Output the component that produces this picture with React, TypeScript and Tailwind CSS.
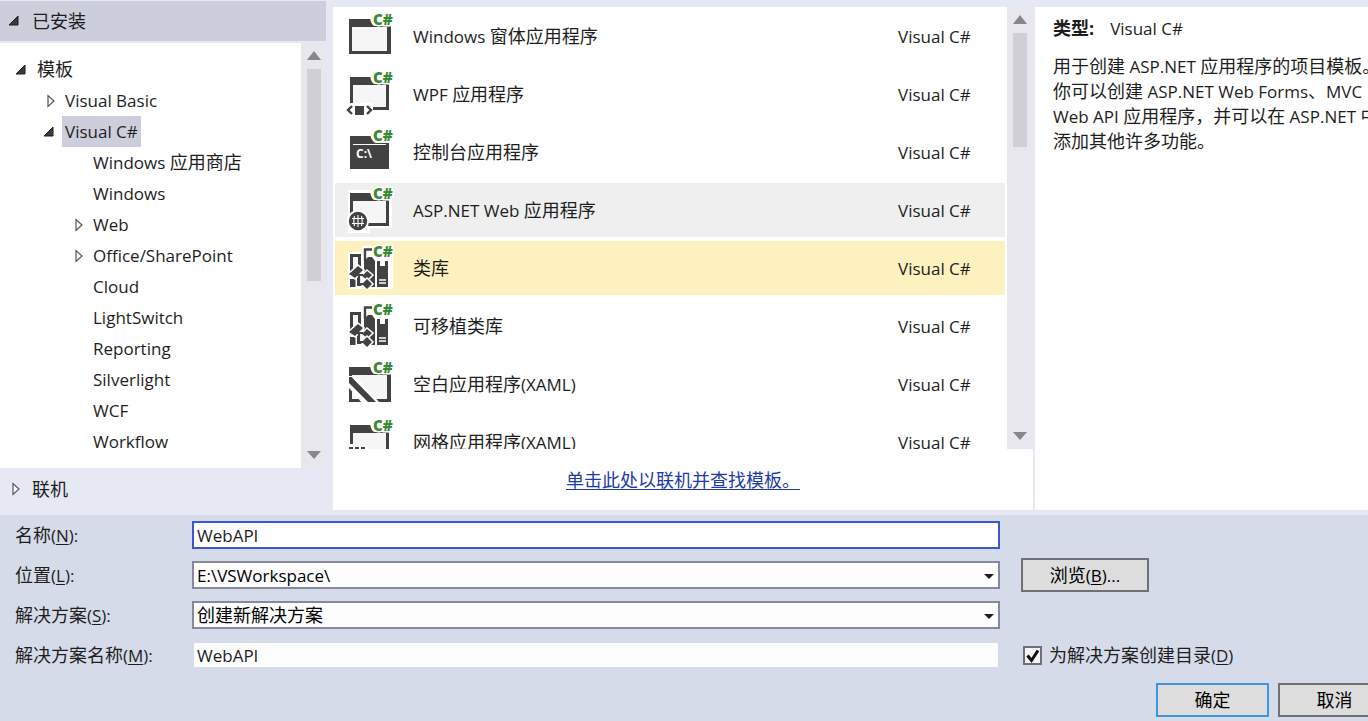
import React, { ReactNode, useState } from "react";

type TreeItem = {
  label: string;
  level: number;
  arrow?: "open" | "closed";
};

type Template = {
  name: string;
  icon: ReactNode;
};

const DARK = "#424242";
const PAPER = "#f6f6f6";

// Latin runs are set one pixel smaller than the Chinese around them
const Text = ({ children }: { children: string }) => (
  <>
    {children.split(/([\x20-\x7e]+)/).map((part, index) =>
      index % 2 ? (
        <span key={index} className="text-[17px] whitespace-pre">
          {part}
        </span>
      ) : (
        part
      )
    )}
  </>
);

// Label with its access key underlined, e.g. 名称(N):
const KeyLabel = ({ text, hotkey, end = "" }: { text: string; hotkey: string; end?: string }) => (
  <>
    {text}
    <span className="text-[17px]">
      (<u className="underline-offset-2">{hotkey}</u>){end}
    </span>
  </>
);

const Arrow = ({ type }: { type?: "open" | "closed" }) => (
  <svg width="12" height="16" viewBox="0 0 12 16" className="shrink-0" aria-hidden="true">
    {type === "open" && <path d="M10 3v9H1z" fill="#3a3a3a" stroke="#1e1e1e" />}
    {type === "closed" && (
      <path d="M5 2.5v11l6-5.5z" fill="#fff" stroke="#55555c" strokeWidth="1.2" />
    )}
  </svg>
);

const ScrollBar = ({ thumb }: { thumb: string }) => (
  <div className="w-[26px] shrink-0 bg-[#e8e7ed] flex flex-col items-center pt-2 pb-2">
    <svg width="14" height="9" viewBox="0 0 14 9" aria-hidden="true">
      <path d="M7 0l7 9H0z" fill="#86868f" />
    </svg>
    <div className={`w-[14px] bg-[#d0cfd6] mt-[9px] ${thumb}`} />
    <svg width="14" height="9" viewBox="0 0 14 9" className="mt-auto" aria-hidden="true">
      <path d="M0 0h14L7 8z" fill="#86868f" />
    </svg>
  </div>
);

const Icon = ({ children }: { children: ReactNode }) => (
  <svg width="52" height="54" viewBox="0 0 52 54" className="shrink-0" aria-hidden="true">
    {children}
    <text
      x="29"
      y="16"
      fill="#388a34"
      stroke="#fff"
      strokeWidth="3"
      paintOrder="stroke"
      fontFamily="Open Sans"
      fontWeight="800"
      fontSize="15"
    >
      C#
    </text>
  </svg>
);

// Window frame shared by most of the template icons
const Frame = ({ small }: { small?: boolean }) =>
  small ? (
    <>
      <path d="M6 10h39v33H6z" fill={DARK} />
      <path d="M9 18h33v22H9z" fill={PAPER} />
      <path d="M26 9h20v8H30q-3-2-4-8z" fill="#fff" />
    </>
  ) : (
    <>
      <path d="M5 10h42v35H5z" fill={DARK} />
      <path d="M8 18h35v24H8z" fill={PAPER} />
      <path d="M26 9h22v8H30q-3-2-4-8z" fill="#fff" />
    </>
  );

const WindowIcon = () => (
  <Icon>
    <Frame />
  </Icon>
);

const WpfIcon = () => (
  <Icon>
    <Frame small />
    <path d="M2 36h27v13H2z" fill="#fff" />
    <path d="M8 39l-4 4 4 4M23 39l4 4-4 4" fill="none" stroke={DARK} strokeWidth="2.4" />
    <path d="M11 39h9v9h-9z" fill={DARK} />
  </Icon>
);

const ConsoleIcon = () => (
  <Icon>
    <path d="M6 11h39v33H6z" fill={DARK} />
    <path d="M9 19.500h33" stroke="#fff" />
    <path d="M26 9h20v9H31q-4-3-5-9z" fill="#fff" />
    <text x="12" y="33" fill="#fff" fontFamily="Open Sans" fontWeight="700" fontSize="12">
      C:\
    </text>
  </Icon>
);

const WebIcon = () => (
  <Icon>
    <path d="M4 7h44v38H26v5H4z" fill="#fff" />
    <Frame small />
    <circle cx="14" cy="38" r="11" fill="#fff" />
    <circle cx="14" cy="38" r="9.2" fill={DARK} />
    <path
      d="M8 35.500h12M8 40.500h12M14 32v12M10.500 33q-1.500 5 0 10M17.500 33q1.500 5 0 10"
      fill="none"
      stroke="#fff"
      strokeWidth="1.1"
    />
  </Icon>
);

const LibraryIcon = () => (
  <Icon>
    <path d="M4 11h14V5h31v43H4z" fill="#fff" />
    <path d="M7.500 30V14.500h8V30" fill={PAPER} stroke={DARK} strokeWidth="3" />
    <path d="M6 38h8v8H6z" fill={DARK} />
    <path d="M21 20V8.500h7" fill="none" stroke={DARK} strokeWidth="2.400" />
    <path d="M24 16h4l3 4v26H20V20z" fill={DARK} />
    <path d="M33 20h3v5h5v-5h3v26H33z" fill={DARK} />
    <path d="M35 39h7M35 42h7" stroke="#fff" strokeWidth="1.400" />
    {/* linked blocks in front of the books */}
    <g fill={DARK} stroke="#fff" strokeWidth="3" paintOrder="stroke">
      <path d="M13 33h7v2h-4v8h4v2h-7z" />
      <path d="M5 33l9-8 5 4-8 8z" />
      <path d="M18 35l5-5 5 4-5 5z" />
      <path d="M18 43l5-5 5 5-5 5z" />
    </g>
    <path d="M13 34h6M15 34v9h4" fill="none" stroke={DARK} strokeWidth="2.200" />
  </Icon>
);

const BlankIcon = () => (
  <Icon>
    <Frame />
    <path d="M5 19h6l25 27H18L5 31z" fill="#fff" />
    <path d="M5 20h2.500L32 45h-8L5 26z" fill={DARK} />
  </Icon>
);

const GridIcon = () => (
  <Icon>
    <Frame small />
    <path d="M4 29h19v20H4z" fill="#fff" />
    <path d="M9 28h15v4H9z" fill={PAPER} />
    <path d="M5 32h4v3H5zM11 32h4v3h-4zM17 32h4v3h-4z" fill={DARK} />
  </Icon>
);

const tree: TreeItem[] = [
  { label: "模板", level: 0, arrow: "open" },
  { label: "Visual Basic", level: 1, arrow: "closed" },
  { label: "Visual C#", level: 1, arrow: "open" },
  { label: "Windows 应用商店", level: 2 },
  { label: "Windows", level: 2 },
  { label: "Web", level: 2, arrow: "closed" },
  { label: "Office/SharePoint", level: 2, arrow: "closed" },
  { label: "Cloud", level: 2 },
  { label: "LightSwitch", level: 2 },
  { label: "Reporting", level: 2 },
  { label: "Silverlight", level: 2 },
  { label: "WCF", level: 2 },
  { label: "Workflow", level: 2 },
];

const levelPadding = ["pl-[15px]", "pl-[43px]", "pl-[71px]"];

const templates: Template[] = [
  { name: "Windows 窗体应用程序", icon: <WindowIcon /> },
  { name: "WPF 应用程序", icon: <WpfIcon /> },
  { name: "控制台应用程序", icon: <ConsoleIcon /> },
  { name: "ASP.NET Web 应用程序", icon: <WebIcon /> },
  { name: "类库", icon: <LibraryIcon /> },
  { name: "可移植类库", icon: <LibraryIcon /> },
  { name: "空白应用程序(XAML)", icon: <BlankIcon /> },
  { name: "网格应用程序(XAML)", icon: <GridIcon /> },
];

const rowColor = (index: number) => {
  if (index === 3) return "bg-[#efefef]";
  if (index === 4) return "bg-[#fdf2bf]";
  return "bg-white";
};

const Dropdown = ({ id, value }: { id: string; value: string }) => (
  <div className="relative h-7">
    <select
      id={id}
      className={`appearance-none block w-full h-full bg-[#fdfdfe] border-2 border-[#868a9c] pl-[3px] text-black ${
        /^[\x20-\x7e]+$/.test(value) ? "text-[17px]" : "text-[18px]"
      }`}
    >
      <option>{value}</option>
    </select>
    <svg
      width="10"
      height="6"
      viewBox="0 0 10 6"
      className="absolute right-[6px] top-[13px] pointer-events-none"
      aria-hidden="true"
    >
      <path d="M0 0h10L5 5z" fill="#1e1e1e" />
    </svg>
  </div>
);

const App = () => {
  const [name, setName] = useState("WebAPI");
  const [solution, setSolution] = useState("WebAPI");
  const [createDir, setCreateDir] = useState(true);

  return (
    <div className="min-h-screen overflow-hidden flex flex-col bg-[#d6dbe9] text-[#1e1e1e] text-[18px] leading-[25px] font-['Open_Sans','Noto_Sans_CJK_SC',sans-serif]">
      <main className="flex h-[515px] bg-[#e6e9f4] pb-[5px]">
        {/* Template categories */}
        <nav className="w-[327px] shrink-0 flex flex-col pt-px">
          <button className="h-10 mr-px bg-[#cccedc] flex items-center pl-2 gap-3 text-left">
            <Arrow type="open" />
            已安装
          </button>
          <div className="flex mt-[2px] h-[425px]">
            <ul className="flex-1 bg-white pt-[11px]">
              {tree.map((item) => (
                <li key={item.label} className={`h-[31px] flex ${levelPadding[item.level]}`}>
                  <button className="flex items-center gap-[7px]">
                    <Arrow type={item.arrow} />
                    <span
                      className={`h-full flex items-center px-[3px] ${
                        item.label === "Visual C#" ? "bg-[#cccedc]" : ""
                      }`}
                    >
                      <span>
                        <Text>{item.label}</Text>
                      </span>
                    </span>
                  </button>
                </li>
              ))}
            </ul>
            <ScrollBar thumb="h-[212px]" />
          </div>
          <button className="flex-1 flex items-center pl-2 gap-3 text-left">
            <Arrow type="closed" />
            联机
          </button>
        </nav>

        {/* Template list */}
        <section className="flex-1 min-w-0 ml-[6px] mt-[7px] bg-white flex flex-col">
          <div className="flex h-[442px]">
            <ul className="flex-1 pt-[2px] pl-[2px] pr-[2px] flex flex-col gap-1 overflow-hidden">
              {templates.map((template, index) => (
                <li key={template.name} className="shrink-0">
                  <button className={`w-full h-[54px] pl-[9px] flex items-center text-left ${rowColor(index)}`}>
                    {template.icon}
                    <span className="flex-1 ml-[17px]">
                      <Text>{template.name}</Text>
                    </span>
                    <span className="w-[107px] text-[17px]">Visual C#</span>
                  </button>
                </li>
              ))}
            </ul>
            <ScrollBar thumb="h-[114px]" />
          </div>
          <div className="flex-1 flex items-center justify-center pt-px">
            <a href="#online" className="text-[#1c3aa9] underline underline-offset-2">
              单击此处以联机并查找模板。
            </a>
          </div>
        </section>

        {/* Description of the selected template */}
        <aside className="w-[333px] shrink-0 ml-[2px] mt-[7px] bg-white pl-[18px] pt-[9px] overflow-hidden whitespace-nowrap">
          <p className="flex gap-4">
            <b>类型:</b>
            <span className="text-[17px]">Visual C#</span>
          </p>
          <p className="mt-[13px]">
            <Text>用于创建 ASP.NET 应用程序的项目模板。</Text>
            <br />
            <Text>你可以创建 ASP.NET Web Forms、MVC</Text>
            <br />
            <Text>Web API 应用程序，并可以在 ASP.NET 中</Text>
            <br />
            添加其他许多功能。
          </p>
        </aside>
      </main>

      <form className="pt-[6px]" onSubmit={(e) => e.preventDefault()}>
        <div className="grid grid-cols-[177px_1fr_368px] auto-rows-[28px] gap-y-3 items-center pl-[15px]">
          <label htmlFor="name">
            <KeyLabel text="名称" hotkey="N" end=":" />
          </label>
          <input
            id="name"
            value={name}
            onChange={(e) => setName(e.target.value)}
            className="h-7 bg-white border-2 border-[#3d55cf] px-[3px] text-[17px] outline-none"
          />
          <span />

          <label htmlFor="location">
            <KeyLabel text="位置" hotkey="L" end=":" />
          </label>
          <Dropdown id="location" value="E:\VSWorkspace\" />
          <button
            type="button"
            className="ml-[21px] w-32 h-[34px] bg-[#dddddd] border-2 border-[#6f6f78] text-black"
          >
            浏览
            <span className="text-[17px]">
              (<u className="underline-offset-2">B</u>)...
            </span>
          </button>

          <label htmlFor="solution">
            <KeyLabel text="解决方案" hotkey="S" end=":" />
          </label>
          <Dropdown id="solution" value="创建新解决方案" />
          <span />

          <label htmlFor="solution-name">
            <KeyLabel text="解决方案名称" hotkey="M" end=":" />
          </label>
          <input
            id="solution-name"
            value={solution}
            onChange={(e) => setSolution(e.target.value)}
            className="h-7 bg-[#fdfdfe] bg-clip-padding border-2 border-transparent px-[3px] text-[17px] outline-none"
          />
          <div className="ml-[23px] flex items-center gap-[7px]">
            <span className="relative size-[19px]">
              <input
                id="create-dir"
                type="checkbox"
                checked={createDir}
                onChange={(e) => setCreateDir(e.target.checked)}
                className="appearance-none block size-[19px] bg-[#f4f4f6] border-2 border-[#6f6f78]"
              />
              {createDir && (
                <svg
                  width="19"
                  height="19"
                  viewBox="0 0 19 19"
                  className="absolute inset-0 pointer-events-none"
                  aria-hidden="true"
                >
                  <path d="M4.500 9.500l4 5 6.500-10" fill="none" stroke="#111" strokeWidth="3" />
                </svg>
              )}
            </span>
            <label htmlFor="create-dir">
              <KeyLabel text="为解决方案创建目录" hotkey="D" />
            </label>
          </div>
        </div>

        {/* The last button runs past the right edge */}
        <div className="flex justify-end gap-[9px] mt-[14px] mb-1 -mr-[23px] text-black">
          <button className="w-[113px] h-[34px] bg-[#dddddd] border-2 border-[#3a97e0]">确定</button>
          <button type="button" className="w-[113px] h-[34px] bg-[#dddddd] border-2 border-[#6f6f78]">
            取消
          </button>
        </div>
      </form>
    </div>
  );
};

export default App;
